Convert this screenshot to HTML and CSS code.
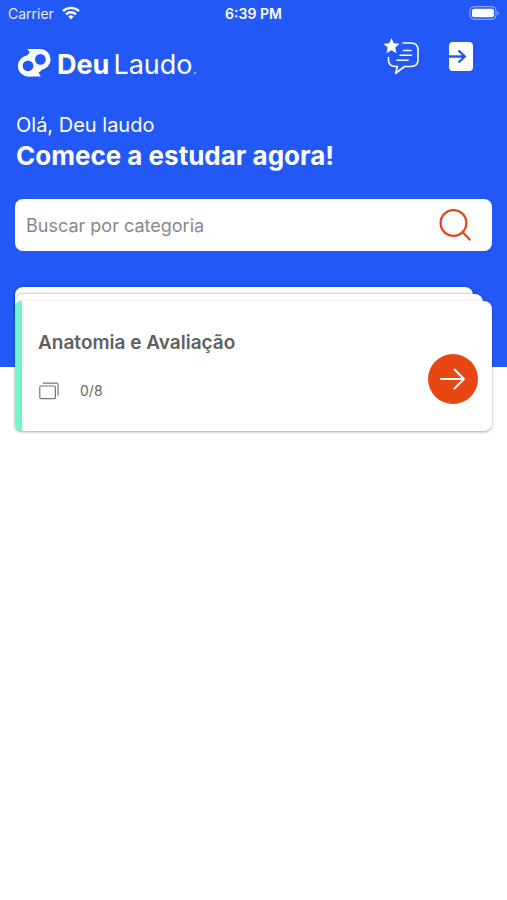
FILE: index.html
```html
<!DOCTYPE html>
<html lang="pt-BR">

<head>
    <meta charset="UTF-8">
    <meta name="viewport" content="width=device-width, initial-scale=1.0">
    <title>Deu Laudo</title>
    <link rel="stylesheet" href="styles.css">
</head>

<body>
    <header class="header">
        <div class="status">
            <div class="carrier">
                <span>Carrier</span>
                <svg width="18" height="14" viewBox="0 0 18 14" fill="none" stroke="#fff" stroke-width="2.4">
                    <path d="M1 5.2a11.4 11.4 0 0 1 16 0" />
                    <path d="M4 8.3a7.2 7.2 0 0 1 10 0" />
                    <path d="M9 13.4l-2.7-2.8a4 4 0 0 1 5.4 0z" fill="#fff" stroke="none" />
                </svg>
            </div>
            <span class="time">6:39 PM</span>
            <div class="battery">
                <svg width="30" height="14" viewBox="0 0 30 14">
                    <rect x="1" y=".7" width="26" height="12.6" rx="4" fill="none" stroke="#9fb5fb" />
                    <rect x="3" y="2.7" width="22" height="8.6" rx="2" fill="#fff" />
                    <path d="M28.4 5v4q1.4-.6 1.4-2t-1.4-2z" fill="#9fb5fb" />
                </svg>
            </div>
        </div>

        <div class="topbar">
            <a class="logo" href="#">
                <svg width="34" height="30" viewBox="0 0 34 30">
                    <g fill="#fff">
                        <circle cx="11.2" cy="18" r="10.4" />
                        <circle cx="23.2" cy="11.4" r="10.4" />
                        <path d="M10.600 1H23.200L22 12 9 14 9.500 8 12.800 4.800z" />
                        <path d="M23.800 28.400H11.200L12 17l13-2-.2 7-3.200 2.800z" />
                    </g>
                    <g fill="#2259f6">
                        <circle cx="11" cy="17.800" r="5.400" />
                        <circle cx="23.4" cy="11.400" r="5.400" />
                    </g>
                </svg>
                <span class="brand"><b>Deu</b><span class="laudo">Laudo</span><small>.</small></span>
            </a>
            <div class="actions">
                <button class="icon-btn" type="button" aria-label="Avaliar">
                    <svg width="38" height="38" viewBox="0 0 38 38" fill="none" stroke="#fff" stroke-width="1.6"
                        stroke-linecap="round" stroke-linejoin="round">
                        <path d="M20 5h8q7 0 7 7v9.500q0 7-7 7h-6.500l-9 7 2-7h-2.500q-6.500 0-6.500-6.500v-2.500" />
                        <path d="M20.500 12.500h7.500M17 17.300h11.500M14 22.200h11" />
                        <path d="M8.500 0l2.300 5.200 5.700.6-4.200 3.800 1.200 5.600-5-2.900-5 2.900 1.200-5.600L.5 5.800l5.700-.6z" fill="#fff"
                            stroke="none" />
                    </svg>
                </button>
                <button class="icon-btn" type="button" aria-label="Sair">
                    <svg width="24" height="30" viewBox="0 0 24 30">
                        <rect x="0" y="0" width="24" height="29" rx="4" fill="#fff" />
                        <path d="M0 14.500h15.500M9.500 8.500l6.300 6-6.300 6" fill="none" stroke="#2259f6" stroke-width="2.400" />
                    </svg>
                </button>
            </div>
        </div>

        <div class="greeting">
            <p>Olá, Deu laudo</p>
            <h1>Comece a estudar agora!</h1>
        </div>

        <form class="search">
            <input type="text" placeholder="Buscar por categoria" aria-label="Buscar por categoria">
            <button class="icon-btn" type="button" aria-label="Buscar">
                <svg width="32" height="32" viewBox="0 0 32 32" fill="none" stroke="#e2491d" stroke-width="2.300"
                    stroke-linecap="round">
                    <circle cx="14.500" cy="14" r="12.900" />
                    <path d="M23.700 23.200l7 7.300" />
                </svg>
            </button>
        </form>
    </header>

    <main class="stack">
        <div class="layer layer-back"></div>
        <div class="layer layer-mid"></div>
        <article class="card">
            <div class="card-info">
                <h2>Anatomia e Avaliação</h2>
                <div class="progress">
                    <svg width="21" height="18" viewBox="0 0 21 18" fill="none" stroke="#777" stroke-width="1.200">
                        <rect x="1.800" y="4" width="15.600" height="12.600" rx="1.200" />
                        <path d="M4.800 1.200h13.600q1.700 0 1.700 1.700v10.600" />
                    </svg>
                    <span>0/8</span>
                </div>
            </div>
            <button class="go" type="button" aria-label="Abrir">
                <svg width="26" height="22" viewBox="0 0 26 22" fill="none" stroke="#fff" stroke-width="2"
                    stroke-linecap="round" stroke-linejoin="round">
                    <path d="M1 11h23M14.500 1.500l9.500 9.500-9.500 9.500" />
                </svg>
            </button>
        </article>
    </main>
</body>

</html>
```
FILE: styles.css
```css
* {
    box-sizing: border-box;
}

body {
    min-height: 100vh;
    margin: 0;
    background: #fff;
    font-family: Inter, "Liberation Sans", sans-serif;
}

h1,
h2,
p {
    margin: 0;
}

svg {
    display: block;
}

button {
    padding: 0;
    border: 0;
    background: none;
    cursor: pointer;
}

.header {
    padding-bottom: 116px;
    background: #2259f6;
    color: #fff;
}

.status {
    display: grid;
    grid-template-columns: 1fr auto 1fr;
    align-items: center;
    height: 26px;
    padding: 0 8px;
    font-size: 14px;
}

.carrier {
    display: flex;
    align-items: center;
    gap: 8px;
    color: #e6ecff;
}

.time {
    font-weight: 600;
}

.battery {
    justify-self: end;
}

.topbar {
    display: flex;
    justify-content: space-between;
    align-items: flex-start;
    padding: 12px 34px 0 17px;
}

.logo {
    display: flex;
    align-items: center;
    gap: 6px;
    padding-top: 4px;
    color: #fff;
    text-decoration: none;
}

.brand {
    padding-top: 8px;
    font-size: 27px;
    line-height: 30px;
}

.brand b {
    font-weight: 700;
}

.laudo {
    margin-left: 4px;
    font-weight: 400;
}

.brand small {
    font-size: 16px;
    opacity: .6;
}

.actions {
    display: flex;
    gap: 28px;
}

.actions .icon-btn {
    display: flex;
    align-items: center;
    height: 38px;
}

.greeting {
    padding: 27px 16px 0;
}

.greeting p {
    font-size: 20px;
    line-height: 30px;
}

.greeting h1 {
    font-size: 26px;
    font-weight: 700;
    line-height: 32px;
}

.search {
    display: flex;
    align-items: center;
    height: 52px;
    margin: 27px 15px 0;
    padding: 0 21px 0 11px;
    border-radius: 8px;
    background: #fff;
}

.search input {
    flex: 1;
    min-width: 0;
    padding: 0;
    border: 0;
    outline: 0;
    background: none;
    color: #333;
    font-family: inherit;
    font-size: 18px;
}

.search input::placeholder {
    color: #888;
}

.stack {
    margin: -80px 15px 0;
    padding-bottom: 24px;
}

.layer {
    height: 20px;
    margin-bottom: -13px;
    border-radius: 8px 8px 0 0;
    background: #fff;
    box-shadow: 0 0 3px rgba(0, 0, 0, .4);
}

.layer-back {
    margin-right: 19px;
}

.layer-mid {
    margin-right: 9px;
}

.card {
    display: flex;
    justify-content: space-between;
    align-items: center;
    padding: 27px 14px 27px 16px;
    border-left: 7px solid #73f7c8;
    border-radius: 6px 8px 8px 6px;
    background: #fff;
    box-shadow: 0 1px 3px rgba(0, 0, 0, .35);
}

.card h2 {
    color: #606060;
    font-size: 19px;
    font-weight: 600;
    line-height: 30px;
}

.progress {
    display: flex;
    align-items: center;
    gap: 21px;
    margin-top: 20px;
    color: #666;
    font-size: 14px;
    line-height: 26px;
}

.go {
    display: flex;
    flex: none;
    justify-content: center;
    align-items: center;
    align-self: flex-end;
    width: 50px;
    height: 50px;
    border-radius: 50%;
    background: #e84612;
}
```
